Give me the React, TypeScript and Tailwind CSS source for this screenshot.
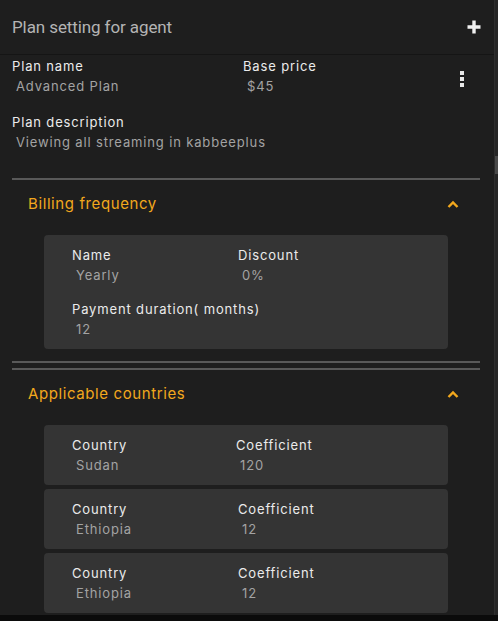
import React from "react";

const Field = ({ label, value, className = "" }: { label: string; value: string; className?: string }) => (
  <div className={"flex flex-col " + className}>
    <div className="text-[13px] leading-[18px] font-normal text-[#ebebeb] tracking-[0.85px]">{label}</div>
    <div className="text-[13px] leading-[18px] text-[#a3a3a3] pl-[4px] mt-[2px] tracking-[0.85px]">{value}</div>
  </div>
);

const Chevron = () => (
  <svg width="12" height="9" viewBox="0 0 12 9" className="text-[#f2a81d]">
    <path d="M1.5 7 L6 2.5 L10.5 7" fill="none" stroke="currentColor" strokeWidth="2.4" />
  </svg>
);

const CountryCard = ({ country, coef, off }: { country: string; coef: string; off: string }) => (
  <div className="bg-[#343434] rounded-[4px] h-[60px] pl-[28px] pt-[11px] flex">
    <Field label="Country" value={country} className={off} />
    <Field label="Coefficient" value={coef} />
  </div>
);

export default function App() {
  return (
    <div className="w-[498px] h-[621px] bg-[#000] flex flex-col overflow-hidden" style={{ fontFamily: "Inter, 'Open Sans', sans-serif" }}>
      <div className="flex h-[615px]">
        <div className="w-[494px] bg-[#1e1e1e] flex flex-col">
          <div className="h-[55px] flex items-center justify-between pl-[12px] pr-[12px] border-b border-[#151515]">
            <div className="text-[17px] text-[#b4b4b4] tracking-[-0.1px] mt-[1px]" style={{ fontFamily: "Roboto, Inter, sans-serif" }}>
              Plan setting for agent
            </div>
            <svg width="16" height="16" viewBox="0 0 16 16">
              <path d="M8 1.5 V14.5 M1.5 8 H14.5" stroke="#f0f0f0" strokeWidth="3.4" />
            </svg>
          </div>
          <div className="px-[12px] pt-[2px] flex flex-col">
            <div className="flex items-start">
              <Field label="Plan name" value="Advanced Plan" className="w-[231px]" />
              <Field label="Base price" value="$45" className="flex-1" />
              <div className="mr-[18px] mt-[14px] flex flex-col gap-[2px]">
                <div className="w-[4px] h-[4px] bg-[#e8e8e8]" />
                <div className="w-[4px] h-[4px] bg-[#e8e8e8]" />
                <div className="w-[4px] h-[4px] bg-[#e8e8e8]" />
              </div>
            </div>
            <Field label="Plan description" value="Viewing all streaming in kabbeeplus" className="mt-[18px]" />
            <div className="mt-[27px] h-[2px] bg-[#595959] w-[468px]" />
            <div className="flex items-center justify-between pl-[16px] pr-[23px] h-[48px]">
              <div className="text-[15px] text-[#f2a81d] tracking-[0.6px]">Billing frequency</div>
              <Chevron />
            </div>
            <div className="ml-[32px] w-[404px] bg-[#343434] rounded-[4px] pl-[28px] pt-[11px] pb-[11px] mt-[7px]">
              <div className="flex">
                <Field label="Name" value="Yearly" className="w-[166px]" />
                <Field label="Discount" value="0%" />
              </div>
              <Field label="Payment duration( months)" value="12" className="mt-[16px]" />
            </div>
            <div className="mt-[12px] h-[2px] bg-[#595959] w-[468px]" />
            <div className="mt-[5px] h-[2px] bg-[#595959] w-[468px]" />
            <div className="flex items-center justify-between pl-[16px] pr-[23px] h-[48px]">
              <div className="text-[15px] text-[#f2a81d] tracking-[0.6px]">Applicable countries</div>
              <Chevron />
            </div>
            <div className="ml-[32px] w-[404px] flex flex-col gap-[4px] mt-[7px]">
              <CountryCard country="Sudan" coef="120" off="w-[164px]" />
              <CountryCard country="Ethiopia" coef="12" off="w-[166px]" />
              <CountryCard country="Ethiopia" coef="12" off="w-[166px]" />
            </div>
          </div>
        </div>
        <div className="w-[4px] bg-[#262626] flex flex-col border-l border-[#2e2e2e]">
          <div className="mt-[156px] h-[18px] bg-[#4a4a4a]" />
        </div>
      </div>
      <div className="flex-1 bg-[#0b0b0b]" />
    </div>
  );
}
